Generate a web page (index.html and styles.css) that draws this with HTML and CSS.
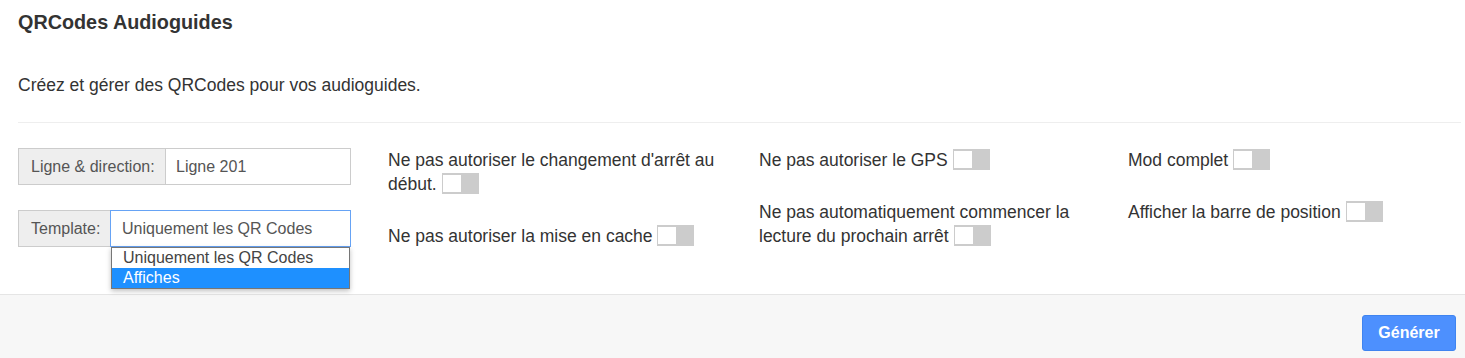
FILE: index.html
```html
<html>

<head>
    <meta charset="utf-8">
    <link rel="stylesheet" href="styles.css">
</head>

<body>
    <div class="panel">
        <div class="panel-heading">
            <h3 class="panel-title">QRCodes Audioguides</h3>
        </div>
        <div class="panel-body">
            <p class="intro">Créez et gérer des QRCodes pour vos audioguides.</p>
            <hr class="sep">
            <div class="row">
                <div class="col col-fields">
                    <div class="input-group">
                        <span class="addon addon-line">Ligne &amp; direction:</span>
                        <span class="field">Ligne 201</span>
                    </div>
                    <div class="input-group">
                        <span class="addon addon-template">Template:</span>
                        <span class="field field-select">Uniquement les QR Codes
                            <span class="dropdown">
                                <span class="option">Uniquement les QR Codes</span>
                                <span class="option selected">Affiches</span>
                            </span>
                        </span>
                    </div>
                </div>
                <div class="col">
                    <div class="switch-item">Ne pas autoriser le changement d'arrêt au début. <span class="toggle"><span class="knob"></span></span></div>
                    <div class="switch-item">Ne pas autoriser la mise en cache <span class="toggle"><span class="knob"></span></span></div>
                </div>
                <div class="col">
                    <div class="switch-item">Ne pas autoriser le GPS <span class="toggle"><span class="knob"></span></span></div>
                    <div class="switch-item">Ne pas automatiquement commencer la lecture du prochain arrêt <span class="toggle"><span class="knob"></span></span></div>
                </div>
                <div class="col">
                    <div class="switch-item">Mod complet <span class="toggle"><span class="knob"></span></span></div>
                    <div class="switch-item">Afficher la barre de position <span class="toggle"><span class="knob"></span></span></div>
                </div>
            </div>
        </div>
        <div class="panel-footer">
            <button class="btn-primary">Générer</button>
        </div>
    </div>
</body>

</html>
```

FILE: styles.css
```css
body {
    margin: 0;
    padding: 0;
    font-family: "Liberation Sans", Arial, sans-serif;
    font-size: 17.5px;
    color: #333;
    background: #fff;
}

.panel-heading {
    padding: 12px 18px;
}

.panel-title {
    margin: 0;
    font-size: 19.8px;
    line-height: 20px;
    font-weight: bold;
}

.panel-body {
    padding: 0 4px 0 18px;
}

.intro {
    margin: 29px 0 0 0;
    line-height: 24px;
}

.sep {
    margin: 25px 0 0 0;
    border: 0;
    border-top: 1px solid #eee;
    height: 0;
}

.row {
    display: grid;
    grid-template-columns: 370px 371px 369px 1fr;
    margin-top: 25px;
    padding-bottom: 46px;
}

.col {
    max-width: 345px;
}

.col-fields {
    width: 333px;
}

.input-group {
    display: flex;
    height: 37px;
    margin-bottom: 25px;
    line-height: 35px;
    font-size: 16px;
    white-space: nowrap;
}

.input-group:last-child,
.switch-item:last-child {
    margin-bottom: 0;
}

.addon {
    box-sizing: border-box;
    background: #eee;
    border: 1px solid #ccc;
    border-right: 0;
    padding: 0 12px;
    color: #555;
}

.addon-line {
    width: 147px;
}

.addon-template {
    width: 92px;
}

.field {
    flex: 1;
    position: relative;
    border: 1px solid #ccc;
    padding: 0 10px;
    color: #555;
}

.field-select {
    border-color: #66a3f5;
    padding-left: 11px;
}

.dropdown {
    position: absolute;
    left: 0;
    right: 0;
    top: 36px;
    background: #fff;
    border: 1px solid #767676;
    box-shadow: 0 2px 5px rgba(0, 0, 0, 0.25);
    line-height: 20px;
    z-index: 10;
}

.option {
    display: block;
    padding: 0 11px;
    height: 20px;
    color: #444;
}

.option.selected {
    background: #1e90ff;
    color: #fff;
}

.switch-item {
    line-height: 24px;
    margin-bottom: 28px;
}

.toggle {
    display: inline-block;
    box-sizing: border-box;
    width: 37px;
    height: 21px;
    padding: 2px 2px 2px 1px;
    background: #ccc;
    vertical-align: -4px;
}

.knob {
    display: block;
    width: 18px;
    height: 17px;
    background: #fff;
}

.panel-footer {
    border-top: 1px solid #e5e5e5;
    background: #f7f7f7;
    padding: 20px 9px 20px 0;
    display: flex;
    justify-content: flex-end;
}

.btn-primary {
    font-family: "Liberation Sans", Arial, sans-serif;
    font-size: 16px;
    font-weight: bold;
    color: #fff;
    background: #4d90fe;
    border: 1px solid #3f84f0;
    border-radius: 3px;
    width: 94px;
    height: 36px;
    padding: 0;
}
```
